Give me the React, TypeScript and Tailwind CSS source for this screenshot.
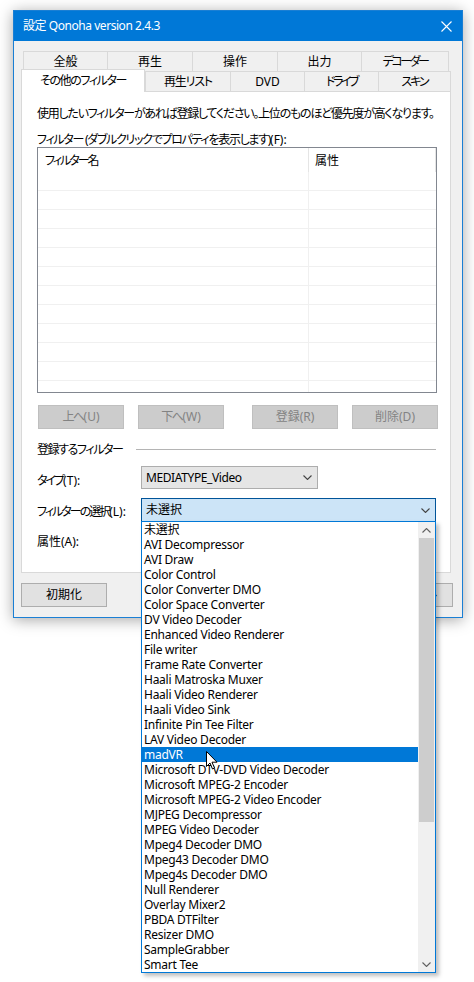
import React from "react";

const FONT = "[font-family:'Noto_Sans','Noto_Sans_CJK_JP',sans-serif] [font-feature-settings:'palt']";

const filters = [
  "未選択",
  "AVI Decompressor",
  "AVI Draw",
  "Color Control",
  "Color Converter DMO",
  "Color Space Converter",
  "DV Video Decoder",
  "Enhanced Video Renderer",
  "File writer",
  "Frame Rate Converter",
  "Haali Matroska Muxer",
  "Haali Video Renderer",
  "Haali Video Sink",
  "Infinite Pin Tee Filter",
  "LAV Video Decoder",
  "madVR",
  "Microsoft DTV-DVD Video Decoder",
  "Microsoft MPEG-2 Encoder",
  "Microsoft MPEG-2 Video Encoder",
  "MJPEG Decompressor",
  "MPEG Video Decoder",
  "Mpeg4 Decoder DMO",
  "Mpeg43 Decoder DMO",
  "Mpeg4s Decoder DMO",
  "Null Renderer",
  "Overlay Mixer2",
  "PBDA DTFilter",
  "Resizer DMO",
  "SampleGrabber",
  "Smart Tee",
];

function Chevron({ up = false, color = "#444" }: { up?: boolean; color?: string }) {
  return (
    <svg width="9" height="5" viewBox="0 0 9 5">
      <path d={up ? "M0.5 4.5 L4.5 0.5 L8.5 4.5" : "M0.5 0.5 L4.5 4.5 L8.5 0.5"} fill="none" stroke={color} strokeWidth="1.1" />
    </svg>
  );
}

function DisabledButton({ jp, key2, track = "" }: { jp: string; key2: string; track?: string }) {
  return (
    <div className="w-[86px] h-[24px] border border-[#bfbfbf] bg-[#cccccc] flex items-center justify-center text-[#838383] text-[12px] whitespace-nowrap">
      <span className={track}>{jp}</span>
      {key2}
    </div>
  );
}

function Tab({ label, w, last = false, track = "" }: { label: string; w: string; last?: boolean; track?: string }) {
  return (
    <div
      className={`${w} h-[20px] border-t border-l ${last ? "border-r" : ""} border-[#d9d9d9] bg-[#f0f0f0] flex items-center justify-center text-[12px] whitespace-nowrap ${track}`}
    >
      {label}
    </div>
  );
}

export default function App() {
  return (
    <div className={`w-[474px] h-[982px] bg-white relative overflow-hidden text-black ${FONT}`}>
      {/* dialog window */}
      <div className="ml-[13px] mt-[10px] w-[450px] h-[608px] border border-[#1a7fd4] bg-[#f0f0f0] shadow-[0_2px_14px_rgba(0,0,0,0.35)] flex flex-col">
        <div className="h-[30px] bg-[#0078d7] flex items-center justify-between pl-[9px] pr-[10px] text-white text-[12px]">
          <span className="tracking-[-0.45px]">設定 Qonoha version 2.4.3</span>
          <svg width="11" height="11" viewBox="0 0 11 11">
            <path d="M0.5 0.5 L10.5 10.5 M10.5 0.5 L0.5 10.5" stroke="#fff" strokeWidth="1.1" />
          </svg>
        </div>

        <div className="pt-[10px] pl-[7px] flex flex-col">
          {/* tab row 1 */}
          <div className="flex ml-[2px]">
            <Tab label="全般" w="w-[84px]" />
            <Tab label="再生" w="w-[85px]" />
            <Tab label="操作" w="w-[85px]" />
            <Tab label="出力" w="w-[84px]" />
            <Tab label="デコーダー" w="w-[88px]" last track="tracking-[-2.5px]" />
          </div>
          {/* tab row 2 */}
          <div className="flex h-[20px] items-end">
            <div className="relative top-[1px] z-10 w-[124px] h-[23px] border-t border-l border-r border-[#d9d9d9] bg-white flex items-center justify-center text-[12px] pb-[1px] tracking-[-1.4px] whitespace-nowrap">
              その他のフィルター
            </div>
            <Tab label="再生リスト" w="w-[85px]" track="tracking-[-1.2px]" />
            <Tab label="DVD" w="w-[74px]" />
            <Tab label="ドライブ" w="w-[74px]" track="tracking-[-2.5px]" />
            <Tab label="スキン" w="w-[73px]" last track="tracking-[-2px]" />
          </div>

          {/* tab panel */}
          <div className="w-[430px] h-[482px] border border-[#d9d9d9] bg-white pl-[15px] text-[12px] flex flex-col">
            <div className="mt-[14px] leading-[15px] whitespace-nowrap tracking-[-1.25px]">
              使用したいフィルターがあれば登録してください。上位のものほど優先度が高くなります。
            </div>
            <div className="mt-[11px] leading-[15px] whitespace-nowrap">
              <span className="tracking-[-1.3px]">フィルター (ダブルクリックでプロパティを表示します)</span>(F):
            </div>

            {/* list view */}
            <div className="w-[400px] h-[246px] border border-[#828790] flex flex-col overflow-hidden">
              <div className="h-[24px] flex shrink-0">
                <div className="w-[271px] border-r border-[#e5e5e5] pl-[7px] pt-[2px] flex items-center tracking-[-2px]">フィルター名</div>
                <div className="w-[127px] border-r border-[#e5e5e5] pl-[6px] pt-[2px] flex items-center">属性</div>
              </div>
              {Array.from({ length: 12 }).map((_, i) => (
                <div key={i} className="h-[19px] flex shrink-0 border-b border-[#f0f0f0] w-[398px]">
                  <div className="w-[271px] border-r border-[#f0f0f0]" />
                  <div className="flex-1" />
                </div>
              ))}
            </div>

            {/* buttons */}
            <div className="mt-[12px] flex ml-[1px] w-[400px]">
              <DisabledButton jp="上へ" key2="(U)" track="tracking-[-1.5px]" />
              <div className="ml-[14px]">
                <DisabledButton jp="下へ" key2="(W)" track="tracking-[-1.5px]" />
              </div>
              <div className="ml-[28px]">
                <DisabledButton jp="登録" key2="(R)" />
              </div>
              <div className="ml-[14px]">
                <DisabledButton jp="削除" key2="(D)" />
              </div>
            </div>

            {/* group */}
            <div className="mt-[13px] flex items-center h-[15px] w-[399px]">
              <span className="leading-[15px] whitespace-nowrap tracking-[-1.4px]">登録するフィルター</span>
              <div className="flex-1 ml-[13px] h-px bg-[#b4b4b4]" />
            </div>

            <div className="mt-[9px] flex items-center h-[23px]">
              <span className="w-[104px] leading-[15px] mt-[5px] whitespace-nowrap">
                <span className="tracking-[-2px]">タイプ</span>(T):
              </span>
              <div className="w-[177px] h-[23px] border border-[#adadad] bg-[#e5e5e5] flex items-center justify-between pl-[4px] pr-[5px]">
                <span className="tracking-[-0.4px]">MEDIATYPE_Video</span>
                <Chevron />
              </div>
            </div>

            <div className="mt-[9px] flex items-center h-[24px]">
              <span className="w-[104px] leading-[15px] mt-[3px] whitespace-nowrap">
                <span className="tracking-[-2px]">フィルターの選択</span>(L):
              </span>
              <div className="w-[295px] h-[24px] border border-[#005499] bg-[#cce4f7] flex items-center justify-between pl-[4px] pr-[5px]">
                <span>未選択</span>
                <Chevron />
              </div>
            </div>

            <div className="mt-[12px] leading-[15px]">属性(A):</div>
          </div>

          {/* bottom buttons */}
          <div className="mt-[10px] flex justify-between w-[432px] text-[12px]">
            <div className="w-[86px] h-[24px] border border-[#adadad] bg-[#e1e1e1] flex items-center justify-center">初期化</div>
            <div className="flex gap-[8px]">
              <div className="w-[86px] h-[24px] border border-[#adadad] bg-[#e1e1e1] flex items-center justify-center">OK</div>
              <div className="w-[86px] h-[24px] border border-[#adadad] bg-[#e1e1e1] flex items-center justify-center">キャンセル</div>
            </div>
          </div>
        </div>
      </div>

      {/* dropped-down list of the combobox */}
      <div className="absolute left-[141px] top-[521px] w-[295px] h-[452px] border border-[#0078d7] bg-white flex shadow-[3px_3px_4px_rgba(0,0,0,0.25)] text-[12px]">
        <div className="flex-1 flex flex-col">
          {filters.map((f) => (
            <div
              key={f}
              className={`h-[15px] leading-[15px] pl-[2px] whitespace-nowrap tracking-[-0.25px] ${f === "madVR" ? "bg-[#0078d7] text-white" : ""}`}
            >
              {f}
            </div>
          ))}
        </div>
        <div className="w-[17px] bg-[#f0f0f0] flex flex-col">
          <div className="h-[16px] flex items-center justify-center">
            <Chevron up color="#606060" />
          </div>
          <div className="mx-[1px] h-[284px] bg-[#cdcdcd]" />
          <div className="flex-1" />
          <div className="h-[16px] flex items-center justify-center">
            <Chevron color="#606060" />
          </div>
        </div>
      </div>

      {/* mouse cursor */}
      <svg className="absolute left-[206px] top-[751px]" width="12" height="19" viewBox="0 0 12 19">
        <path d="M0.5 0.5 L0.5 15.5 L4 12 L6.5 18 L8.5 17 L6 11.2 L11 11.2 Z" fill="#fff" stroke="#000" strokeWidth="1" strokeLinejoin="round" />
      </svg>
    </div>
  );
}
